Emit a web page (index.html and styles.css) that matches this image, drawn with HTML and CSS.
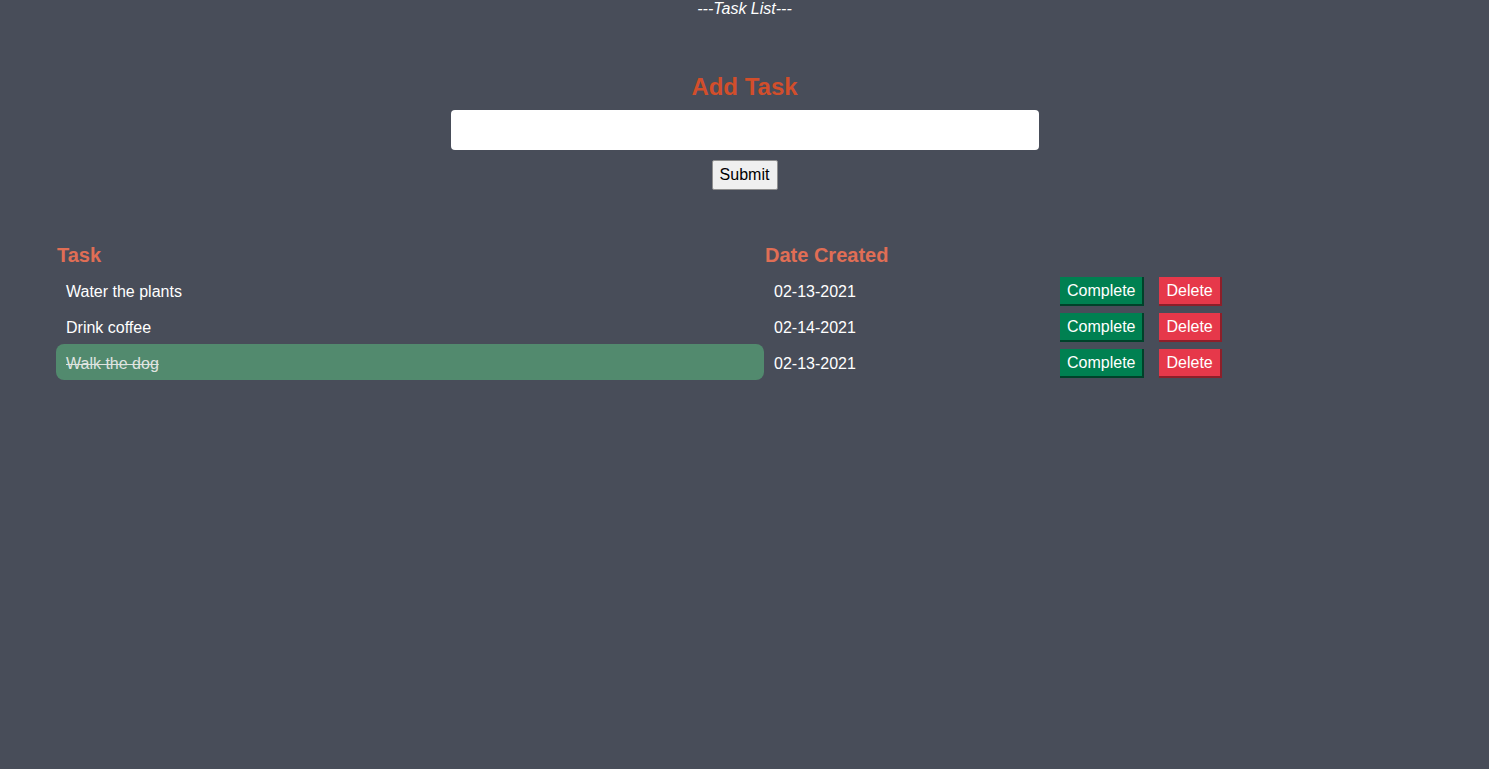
FILE: index.html
```html
<!DOCTYPE html>
<html>
<head>
<meta charset="utf-8">
<title>Task List</title>
<link rel="stylesheet" href="styles.css">
</head>
<body>
<p class="title">---Task List---</p>
<form class="add-form">
  <h2 class="add-title">Add Task</h2>
  <input class="task-input" type="text">
  <button class="submit-btn" type="button">Submit</button>
</form>
<div class="task-table">
  <div class="head">Task</div>
  <div class="head head-date">Date Created</div>
  <div class="head"></div>

  <div class="cell task">Water the plants</div>
  <div class="cell date">02-13-2021</div>
  <div class="cell actions"><button class="btn complete">Complete</button><button class="btn delete">Delete</button></div>

  <div class="cell task">Drink coffee</div>
  <div class="cell date">02-14-2021</div>
  <div class="cell actions"><button class="btn complete">Complete</button><button class="btn delete">Delete</button></div>

  <div class="cell task done">Walk the dog</div>
  <div class="cell date">02-13-2021</div>
  <div class="cell actions"><button class="btn complete">Complete</button><button class="btn delete">Delete</button></div>
</div>
</body>
</html>
```
FILE: styles.css
```css
html, body {
  height: 100%;
}
body {
  margin: 0;
  background: #484d59;
  font-family: "Liberation Sans", Arial, sans-serif;
  font-size: 16px;
  color: #ffffff;
}
.title {
  margin: 0;
  text-align: center;
  font-style: italic;
  line-height: 17px;
}
.add-form {
  display: flex;
  flex-direction: column;
  align-items: center;
  margin-top: 56px;
}
.add-title {
  margin: 0;
  font-size: 24px;
  line-height: 28px;
  color: #d24e2b;
}
.task-input {
  margin-top: 9px;
  width: 588px;
  height: 40px;
  box-sizing: border-box;
  border: none;
  border-radius: 4px;
  background: #ffffff;
  font-size: 16px;
  padding: 0 10px;
}
.submit-btn {
  margin-top: 10px;
  height: 30px;
  width: 66px;
  padding: 0;
  font-family: "Liberation Sans", Arial, sans-serif;
  font-size: 16px;
  color: #000;
  background: #efefef;
  border: 1px solid #8f8f8f;
  border-radius: 2px;
}
.task-table {
  display: grid;
  grid-template-columns: 709px 295px auto;
  margin: 46px 0 0 56px;
}
.head {
  height: 36px;
  line-height: 38px;
  font-size: 20px;
  font-weight: bold;
  color: #e06e55;
  padding-left: 1px;
}
.head-date {
  padding-left: 0;
}
.cell {
  height: 36px;
  box-sizing: border-box;
  display: flex;
  align-items: center;
  padding-top: 4px;
}
.task {
  padding-left: 10px;
  margin-right: 1px;
}
.date {
  padding-left: 9px;
}
.done {
  background: #528a6e;
  border-radius: 8px;
  color: #dfe3e0;
  text-decoration: line-through;
}
.actions {
  gap: 15px;
  padding-top: 2px;
}
.btn {
  font-family: "Liberation Sans", Arial, sans-serif;
  font-size: 16px;
  line-height: 18px;
  color: #ffffff;
  border: none;
  border-right: 2px solid;
  border-bottom: 2px solid;
  padding: 5px 7px 4px 7px;
  border-radius: 0;
}
.complete {
  background: #008051;
  border-color: #00422a;
}
.delete {
  background: #e6384a;
  border-color: #8e1e29;
}
```
